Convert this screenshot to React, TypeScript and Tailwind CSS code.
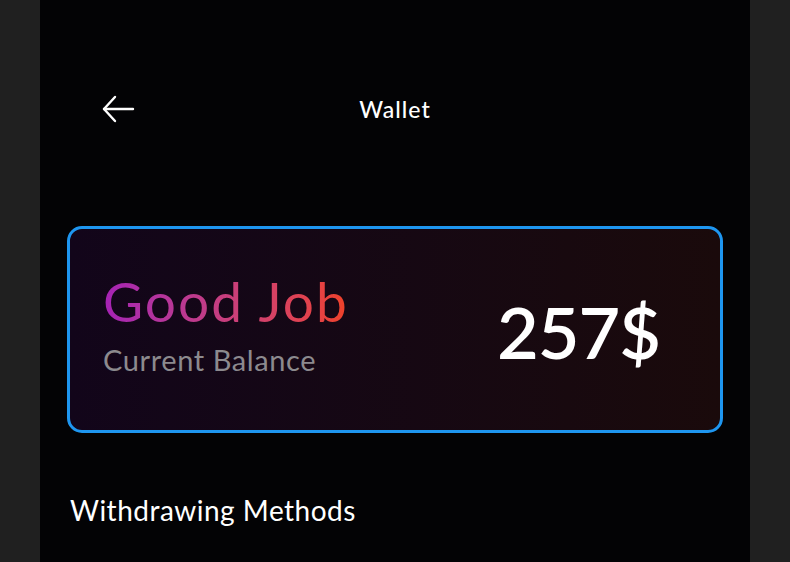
import React from "react";

export default function App() {
  return (
    <div className="w-[790px] h-[562px] bg-[#202020] flex justify-center overflow-hidden" style={{ fontFamily: "Lato, 'Open Sans', sans-serif" }}>
      <div className="w-[710px] h-full bg-[#030305] flex flex-col">
        <div className="relative h-[56px] mt-[81px] flex items-center justify-center">
          <svg className="absolute left-[61px] top-[14px]" width="34" height="28" viewBox="0 0 34 28" fill="none" stroke="white" strokeWidth="2.4" strokeLinecap="round" strokeLinejoin="round">
            <path d="M32 14H3" />
            <path d="M14 2L3 14L14 26" />
          </svg>
          <span className="text-white text-[23px] font-medium tracking-[1px]">Wallet</span>
        </div>
        <div className="mx-[27px] mt-[89px] h-[207px] rounded-[15px] border-[3px] border-[#1e96f0] bg-gradient-to-r from-[#12051a] to-[#1a0a0b] flex items-center justify-between pl-[33px] pr-[60px]">
          <div className="flex flex-col -mt-[14px]">
            <span className="text-[55px] leading-[64px] tracking-[2px] bg-gradient-to-r from-[#a521b5] to-[#ef4124] bg-clip-text text-transparent">Good Job</span>
            <span className="text-[29px] leading-[34px] tracking-[0.6px] text-[#8c8a8e] mt-[10px]">Current Balance</span>
          </div>
          <span className="text-white text-[72px] font-semibold leading-none tracking-[-1px] mt-[2px]">257$</span>
        </div>
        <div className="mt-[59px] ml-[30px] text-white text-[28px] leading-[36px] tracking-[0.5px]">Withdrawing Methods</div>
      </div>
    </div>
  );
}
